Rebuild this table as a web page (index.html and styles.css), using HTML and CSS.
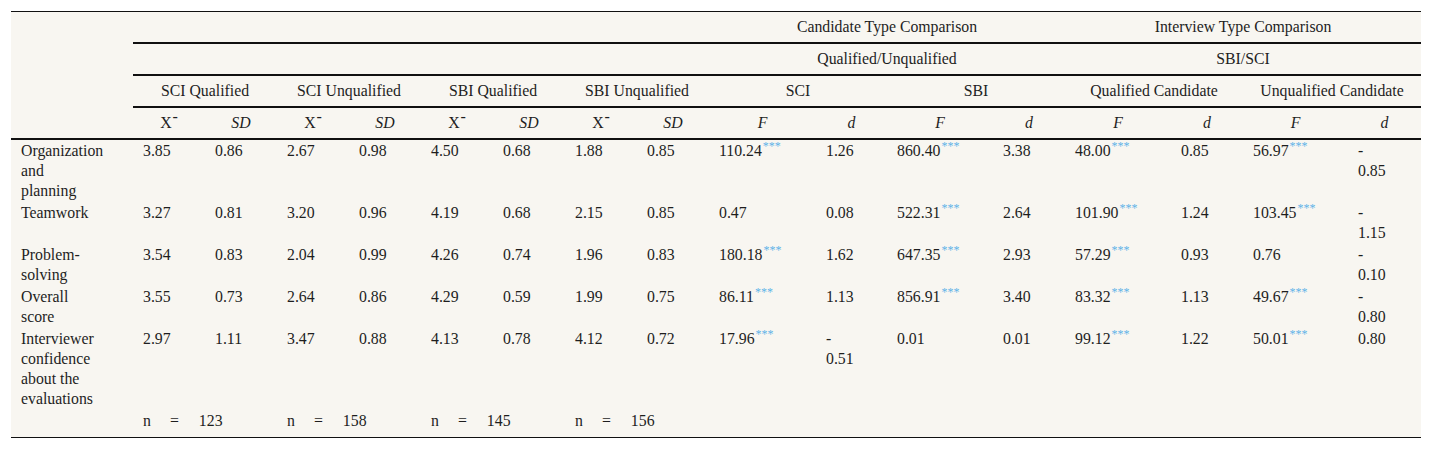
FILE: index.html
```html
<!DOCTYPE html>
<html lang="en">
<head>
<meta charset="utf-8">
<title>Comparison table</title>
<link rel="stylesheet" href="styles.css">
</head>
<body>
<div class="wrap">
<table class="stats">
<colgroup>
<col class="c-label">
<col class="c-n"><col class="c-n"><col class="c-n"><col class="c-n">
<col class="c-n"><col class="c-n"><col class="c-n"><col class="c-n">
<col class="c-f1"><col class="c-d1"><col class="c-f2"><col class="c-d2">
<col class="c-f2"><col class="c-d2"><col class="c-f3"><col class="c-d3">
</colgroup>
<thead>
<tr>
<th class="corner" rowspan="4"></th>
<th class="h" colspan="8"></th>
<th class="h" colspan="4">Candidate Type Comparison</th>
<th class="h" colspan="4">Interview Type Comparison</th>
</tr>
<tr>
<th class="h" colspan="8"></th>
<th class="h" colspan="4">Qualified/Unqualified</th>
<th class="h" colspan="4">SBI/SCI</th>
</tr>
<tr>
<th class="h" colspan="2">SCI Qualified</th>
<th class="h" colspan="2">SCI Unqualified</th>
<th class="h" colspan="2">SBI Qualified</th>
<th class="h" colspan="2">SBI Unqualified</th>
<th class="h" colspan="2">SCI</th>
<th class="h" colspan="2">SBI</th>
<th class="h" colspan="2">Qualified Candidate</th>
<th class="h" colspan="2">Unqualified Candidate</th>
</tr>
<tr class="sub">
<th class="h">X<sup class="bar">-</sup></th><th class="h"><i>SD</i></th>
<th class="h">X<sup class="bar">-</sup></th><th class="h"><i>SD</i></th>
<th class="h">X<sup class="bar">-</sup></th><th class="h"><i>SD</i></th>
<th class="h">X<sup class="bar">-</sup></th><th class="h"><i>SD</i></th>
<th class="h"><i>F</i></th><th class="h"><i>d</i></th>
<th class="h"><i>F</i></th><th class="h"><i>d</i></th>
<th class="h"><i>F</i></th><th class="h"><i>d</i></th>
<th class="h"><i>F</i></th><th class="h"><i>d</i></th>
</tr>
</thead>
<tbody>
<tr>
<td>Organization<br>and<br>planning</td>
<td>3.85</td><td>0.86</td><td>2.67</td><td>0.98</td><td>4.50</td><td>0.68</td><td>1.88</td><td>0.85</td>
<td>110.24<sup class="sig">***</sup></td><td>1.26</td>
<td>860.40<sup class="sig">***</sup></td><td>3.38</td>
<td>48.00<sup class="sig">***</sup></td><td>0.85</td>
<td>56.97<sup class="sig">***</sup></td><td>-<br>0.85</td>
</tr>
<tr>
<td>Teamwork</td>
<td>3.27</td><td>0.81</td><td>3.20</td><td>0.96</td><td>4.19</td><td>0.68</td><td>2.15</td><td>0.85</td>
<td>0.47</td><td>0.08</td>
<td>522.31<sup class="sig">***</sup></td><td>2.64</td>
<td>101.90<sup class="sig">***</sup></td><td>1.24</td>
<td>103.45<sup class="sig">***</sup></td><td>-<br>1.15</td>
</tr>
<tr>
<td>Problem-<br>solving</td>
<td>3.54</td><td>0.83</td><td>2.04</td><td>0.99</td><td>4.26</td><td>0.74</td><td>1.96</td><td>0.83</td>
<td>180.18<sup class="sig">***</sup></td><td>1.62</td>
<td>647.35<sup class="sig">***</sup></td><td>2.93</td>
<td>57.29<sup class="sig">***</sup></td><td>0.93</td>
<td>0.76</td><td>-<br>0.10</td>
</tr>
<tr>
<td>Overall<br>score</td>
<td>3.55</td><td>0.73</td><td>2.64</td><td>0.86</td><td>4.29</td><td>0.59</td><td>1.99</td><td>0.75</td>
<td>86.11<sup class="sig">***</sup></td><td>1.13</td>
<td>856.91<sup class="sig">***</sup></td><td>3.40</td>
<td>83.32<sup class="sig">***</sup></td><td>1.13</td>
<td>49.67<sup class="sig">***</sup></td><td>-<br>0.80</td>
</tr>
<tr>
<td>Interviewer<br>confidence<br>about the<br>evaluations</td>
<td>2.97</td><td>1.11</td><td>3.47</td><td>0.88</td><td>4.13</td><td>0.78</td><td>4.12</td><td>0.72</td>
<td>17.96<sup class="sig">***</sup></td><td>-<br>0.51</td>
<td>0.01</td><td>0.01</td>
<td>99.12<sup class="sig">***</sup></td><td>1.22</td>
<td>50.01<sup class="sig">***</sup></td><td>0.80</td>
</tr>
<tr class="count">
<td></td>
<td colspan="2"><span class="nn">n</span><span class="eq">=</span><span>123</span></td>
<td colspan="2"><span class="nn">n</span><span class="eq">=</span><span>158</span></td>
<td colspan="2"><span class="nn">n</span><span class="eq">=</span><span>145</span></td>
<td colspan="2"><span class="nn">n</span><span class="eq">=</span><span>156</span></td>
<td></td><td></td><td></td><td></td><td></td><td></td><td></td><td></td>
</tr>
</tbody>
</table>
</div>
</body>
</html>
```

FILE: styles.css
```css
html, body {
  margin: 0;
  padding: 0;
  background: #ffffff;
}

.wrap {
  padding: 11px 11px 0 11px;
}

.stats {
  width: 1410px;
  table-layout: fixed;
  border-collapse: separate;
  border-spacing: 0;
  background: #f8f6f1;
  border-top: 1px solid #111;
  border-bottom: 1px solid #111;
  font-family: "Liberation Serif", "Times New Roman", serif;
  font-size: 15.8px;
  line-height: 20px;
  color: #1e1e1e;
}

.c-label { width: 122px; }
.c-n { width: 72px; }
.c-f1 { width: 107px; }
.c-d1 { width: 71px; }
.c-f2 { width: 106px; }
.c-d2 { width: 72px; }
.c-f3 { width: 105px; }
.c-d3 { width: 73px; }

.stats th {
  font-weight: normal;
  padding: 5px 10px;
  text-align: center;
  vertical-align: middle;
  white-space: nowrap;
}

.stats th.h,
.stats th.corner {
  border-bottom: 2px solid #111;
}

.stats td {
  padding: 1px 10px;
  text-align: left;
  vertical-align: top;
  white-space: nowrap;
}

.stats tr.count td {
  padding-bottom: 6px;
}

.bar {
  font-size: 16px;
  line-height: 0;
  vertical-align: 6px;
  margin-left: 1px;
}

.sig {
  font-size: 12px;
  line-height: 0;
  vertical-align: 6px;
  color: #5eb3e8;
  margin-left: 1px;
}

.nn {
  margin-right: 19px;
}

.eq {
  margin-right: 20px;
}
```
